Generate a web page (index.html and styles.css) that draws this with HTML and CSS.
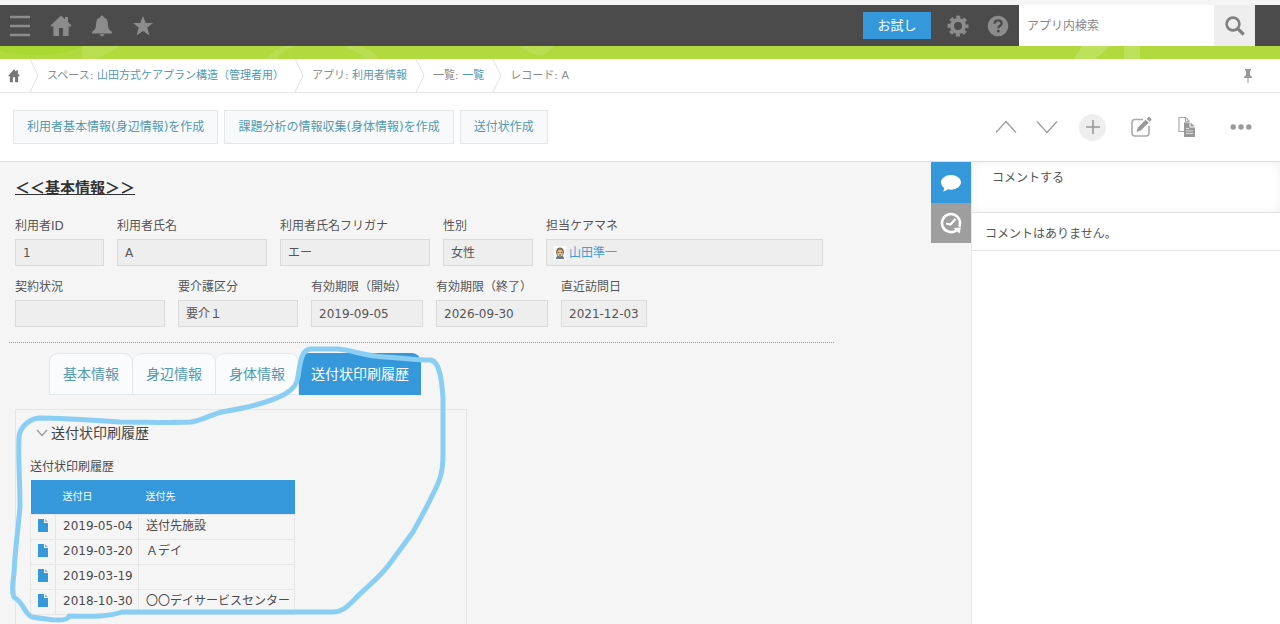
FILE: index.html
```html
<!DOCTYPE html>
<html lang="ja">
<head>
<meta charset="utf-8">
<title>利用者情報</title>
<link rel="stylesheet" href="styles.css">
</head>
<body>
<header class="topbar">
  <nav class="topbar-nav" aria-label="メイン">
    <button class="icon-btn" type="button" aria-label="メニュー"><svg width="22" height="22" viewBox="0 0 22 22"><path d="M1 2h20M1 11h20M1 20h20" stroke="currentColor" stroke-width="2.4"/></svg></button>
    <a class="icon-btn" href="#" aria-label="ポータル"><svg width="22" height="22" viewBox="0 0 22 22"><path d="M11 0.500L15 4.300V2h3v5.100L21.500 10.500l-1.500 1.400L18.600 11V21H13v-8H9v8H3.400V11L2 11.900 0.500 10.500z" fill="currentColor"/></svg></a>
    <button class="icon-btn" type="button" aria-label="通知"><svg width="22" height="22" viewBox="0 0 22 22"><path d="M11 0.500c1 0 1.600.8 1.600 1.800 3 .8 4.300 3.300 4.300 6.500 0 4.600 1.200 6.200 4 7.900v1.800H1.100v-1.800c2.800-1.700 4-3.300 4-7.900 0-3.200 1.300-5.700 4.300-6.500 0-1 .6-1.800 1.600-1.800zM8.500 19.300h5c-.4 1.300-1.300 2-2.500 2s-2.100-.7-2.500-2z" fill="currentColor"/></svg></button>
    <button class="icon-btn" type="button" aria-label="ブックマーク"><svg width="22" height="22" viewBox="0 0 22 22"><path d="M11 1l2.800 7H21l-5.700 4.600L17.500 20.500 11 16l-6.500 4.500 2.200-7.900L1 8h7.200z" fill="currentColor"/></svg></button>
  </nav>
  <div class="topbar-tools">
    <button class="trial" type="button">お試し</button>
    <button class="icon-btn" type="button" aria-label="設定"><svg width="22" height="22" viewBox="0 0 22 22"><g fill="none" stroke="currentColor"><circle cx="11" cy="11" r="6" stroke-width="4"/><circle cx="11" cy="11" r="9" stroke-width="3" stroke-dasharray="4 3.070" stroke-dashoffset="2"/></g></svg></button>
    <button class="icon-btn" type="button" aria-label="ヘルプ"><svg width="22" height="22" viewBox="0 0 22 22"><circle cx="11" cy="11" r="10.300" fill="currentColor"/><path d="M7.600 8.800c0-2.200 1.400-3.400 3.500-3.400s3.500 1.200 3.500 3c0 2.400-3.200 2.400-3.200 4.800" fill="none" stroke="#4b4b4b" stroke-width="2.400"/><circle cx="11.300" cy="16" r="1.500" fill="#4b4b4b"/></svg></button>
    <form class="search">
      <input class="search-input" type="search" placeholder="アプリ内検索" aria-label="アプリ内検索">
      <button class="search-btn" type="button" aria-label="検索"><svg width="20" height="20" viewBox="0 0 20 20"><g fill="none" stroke="currentColor"><circle cx="8" cy="8" r="6.400" stroke-width="2.600"/><path d="M12.700 12.700l6 5.800" stroke-width="3.200"/></g></svg></button>
    </form>
  </div>
</header>
<div class="ribbon">
  <svg width="560" height="13" viewBox="0 0 560 13" aria-hidden="true"><path d="M0 5c28 7 62 5 84-5H0z" fill="#a8d831"/><path d="M82 0h38C110 6 104 9 96 13H82zM266 13c4-6 10-10 18-13h14c-13 3-18 8-22 13zM342 0h18c10 3 16 8 20 13h-15c-6-6-13-10-23-13zM520 0h34c-8 12-22 12-34 0z" fill="#b9de4f"/></svg>
  <svg width="210" height="13" viewBox="0 0 210 13" aria-hidden="true"><path d="M14 0h32L28 13H4zM52 0h48l-2 0H84V13H68V0z" fill="none"/><path d="M12 0h28L26 13H4zM54 0h16v13H54z" fill="#bce15a"/></svg>
</div>
<nav class="crumbs" aria-label="パンくず">
  <a class="crumb-home" href="#" aria-label="ホーム"><svg width="12" height="14" viewBox="0 0 22 22" preserveAspectRatio="none"><path d="M11 0.500L15 4.300V2h3v5.100L21.500 10.500l-1.500 1.400L18.600 11V21H13v-8H9v8H3.400V11L2 11.900 0.500 10.500z" fill="#777"/></svg></a>
  <svg class="crumb-sep" width="10" height="33" viewBox="0 0 10 33"><path d="M1 0l8 16.500L1 33"/></svg>
  <span class="crumb crumb-space">スペース: <a href="#">山田方式ケアプラン構造（管理者用）</a></span>
  <svg class="crumb-sep" width="10" height="33" viewBox="0 0 10 33"><path d="M1 0l8 16.500L1 33"/></svg>
  <span class="crumb">アプリ: <a href="#">利用者情報</a></span>
  <svg class="crumb-sep" width="10" height="33" viewBox="0 0 10 33"><path d="M1 0l8 16.500L1 33"/></svg>
  <span class="crumb">一覧: <a href="#">一覧</a></span>
  <svg class="crumb-sep" width="10" height="33" viewBox="0 0 10 33"><path d="M1 0l8 16.500L1 33"/></svg>
  <span class="crumb">レコード: A</span>
  <button class="pin" type="button" aria-label="固定"><svg width="8" height="14" viewBox="0 0 8 14"><path d="M1 0h6v1.500H6V6l2 2v1H4.500v5h-1V9H0V8l2-2V1.500H1z" fill="#999"/></svg></button>
</nav>
<div class="toolbar">
  <div class="actions">
    <button class="action" type="button">利用者基本情報(身辺情報)を作成</button>
    <button class="action" type="button">課題分析の情報収集(身体情報)を作成</button>
    <button class="action" type="button">送付状作成</button>
  </div>
  <div class="record-tools">
    <div class="pager">
      <button class="tool" type="button" aria-label="前へ"><svg width="22" height="14" viewBox="0 0 22 14"><path d="M1 12.500L11 1.500l10 11" fill="none" stroke="#999" stroke-width="1.200"/></svg></button>
      <button class="tool" type="button" aria-label="次へ"><svg width="22" height="14" viewBox="0 0 22 14"><path d="M1 1.500l10 11 10-11" fill="none" stroke="#999" stroke-width="1.200"/></svg></button>
    </div>
    <button class="tool tool-add" type="button" aria-label="追加"><svg width="14" height="14" viewBox="0 0 14 14"><path d="M7 0v14M0 7h14" stroke="#999" stroke-width="1.600"/></svg></button>
    <button class="tool" type="button" aria-label="編集"><svg width="22" height="22" viewBox="0 0 22 22"><path d="M13 3.500H5a3 3 0 0 0-3 3V17a3 3 0 0 0 3 3h11a3 3 0 0 0 3-3v-7" fill="none" stroke="#aaa" stroke-width="1.600"/><path d="M6.500 16l1.400-4.400 7.800-7.800 3 3-7.900 7.800zM16.700 2.800l1.500-1.500c.6-.5 1-.4 1.500 0l1.400 1.400c.4.500.5 1 0 1.500l-1.500 1.500z" fill="#999"/></svg></button>
    <button class="tool" type="button" aria-label="複製"><svg width="18" height="22" viewBox="0 0 18 22"><path d="M6 15.500H1V1.500h6.500l4 4" fill="none" stroke="#aaa" stroke-width="1.200"/><path d="M7.500 1.500v4h4" fill="none" stroke="#aaa"/><path d="M6 6.500h5.500v5H17V21H6zM12.500 6.500L17 10.500h-4.500z" fill="#999"/><path d="M8 12.500h3M8 15h7M8 17.500h7" stroke="#ddd"/></svg></button>
    <button class="tool tool-more" type="button" aria-label="その他"><svg width="22" height="6" viewBox="0 0 22 6"><g fill="#999"><circle cx="3.200" cy="3" r="2.700"/><circle cx="11" cy="3" r="2.700"/><circle cx="18.800" cy="3" r="2.700"/></g></svg></button>
  </div>
</div>
<div class="workspace">
  <main class="record">
    <h1 class="record-title">＜＜基本情報＞＞</h1>
    <dl class="fields">
      <div class="field w-id"><dt>利用者ID</dt><dd>1</dd></div>
      <div class="field w-name"><dt>利用者氏名</dt><dd>A</dd></div>
      <div class="field w-name"><dt>利用者氏名フリガナ</dt><dd>エー</dd></div>
      <div class="field w-sex"><dt>性別</dt><dd>女性</dd></div>
      <div class="field w-manager"><dt>担当ケアマネ</dt><dd><svg width="12" height="14" viewBox="0 0 12 14"><path fill="#fff" d="M0 0h12v14H0z"/><path d="M2 13c0-3 2-4 4-4s4 1 4 4z" fill="#68798a"/><ellipse cx="6" cy="6" rx="4" ry="4.600" fill="#7e6648"/><ellipse cx="6" cy="7" rx="2.800" ry="3.600" fill="#e2bd8e"/><path d="M4 6.500h1.500M6.500 6.500H8M5 9h2" stroke="#544336" stroke-width=".7"/></svg><a href="#">山田準一</a></dd></div>
    </dl>
    <dl class="fields">
      <div class="field w-name"><dt>契約状況</dt><dd></dd></div>
      <div class="field w-care"><dt>要介護区分</dt><dd>要介１</dd></div>
      <div class="field w-term"><dt>有効期限（開始）</dt><dd>2019-09-05</dd></div>
      <div class="field w-term"><dt>有効期限（終了）</dt><dd>2026-09-30</dd></div>
      <div class="field w-visit"><dt>直近訪問日</dt><dd>2021-12-03</dd></div>
    </dl>
    <hr class="rule">
    <div class="tabs" role="tablist">
      <button class="tab" type="button" role="tab">基本情報</button>
      <button class="tab" type="button" role="tab">身辺情報</button>
      <button class="tab" type="button" role="tab">身体情報</button>
      <button class="tab tab-active" type="button" role="tab" aria-selected="true">送付状印刷履歴</button>
    </div>
    <section class="group">
      <h2 class="group-title"><svg width="12" height="8" viewBox="0 0 12 8"><path d="M1 1l5 5.500L11 1" fill="none" stroke="#999" stroke-width="1.200"/></svg>送付状印刷履歴</h2>
      <table class="history">
        <caption>送付状印刷履歴</caption>
        <thead><tr><th class="col-icon"></th><th class="col-date">送付日</th><th class="col-to">送付先</th></tr></thead>
        <tbody>
          <tr><td><a href="#" aria-label="詳細"><svg width="10" height="13" viewBox="0 0 10 13"><path d="M0 0h6v4h4v9H0z" fill="#3498db"/><path d="M7 0l3 3H7z" fill="#7dbce8"/></svg></a></td><td>2019-05-04</td><td>送付先施設</td></tr>
          <tr><td><a href="#" aria-label="詳細"><svg width="10" height="13" viewBox="0 0 10 13"><path d="M0 0h6v4h4v9H0z" fill="#3498db"/><path d="M7 0l3 3H7z" fill="#7dbce8"/></svg></a></td><td>2019-03-20</td><td>Ａデイ</td></tr>
          <tr><td><a href="#" aria-label="詳細"><svg width="10" height="13" viewBox="0 0 10 13"><path d="M0 0h6v4h4v9H0z" fill="#3498db"/><path d="M7 0l3 3H7z" fill="#7dbce8"/></svg></a></td><td>2019-03-19</td><td></td></tr>
          <tr><td><a href="#" aria-label="詳細"><svg width="10" height="13" viewBox="0 0 10 13"><path d="M0 0h6v4h4v9H0z" fill="#3498db"/><path d="M7 0l3 3H7z" fill="#7dbce8"/></svg></a></td><td>2018-10-30</td><td>〇〇デイサービスセンター</td></tr>
        </tbody>
      </table>
    </section>
    <svg class="marker" width="460" height="290" viewBox="0 340 460 290" aria-hidden="true"><path d="M298 377C300 364 301 349 311 349H338C352 350 365 356 384 357C402 358 418 360 431 360C440 362 442 382 443 398V455C443 474 439 482 433 494C427 507 420 519 413 532L391 562C379 579 365 588 354 600C348 606 342 612 333 612H122C104 618 85 616 69 616C68 622 50 620 32 617C24 614 25 604 14 597C11 592 13 582 14 573C15 550 18 530 20 507C20 480 18 460 19 437C20 427 29 419 39 418C60 418 90 420 120 422C145 422 170 423 191 422C205 420 212 413 227 411C250 407 271 402 285 394C294 389 297 384 298 377Z"/></svg>
  </main>
  <div class="side-tabs">
    <button class="side-tab side-tab-active" type="button" aria-label="コメント"><svg width="20" height="18" viewBox="0 0 20 18"><path d="M10 1c5.500 0 10 3.300 10 7.300s-4.500 7.400-10 7.400c-1.200 0-2.400-.2-3.500-.5C5.500 16.500 4 17.200 2 17.400c.8-1 1.200-2.200 1.100-3.500C1.200 12.500 0 10.500 0 8.300 0 4.300 4.500 1 10 1z" fill="#fff"/></svg></button>
    <button class="side-tab" type="button" aria-label="変更履歴"><svg width="22" height="22" viewBox="0 0 22 22"><path d="M16.500 18.200A9 9 0 1 1 20 11c0 1.500-.3 2.700-.7 3.700" fill="none" stroke="#fff" stroke-width="2.600"/><path d="M13.500 16l7.500-.5-1.500 6z" fill="#fff"/><path d="M6 11.500l4.500 1L15.500 7" fill="none" stroke="#fff" stroke-width="2.200"/></svg></button>
  </div>
  <aside class="comments">
    <textarea class="comment-input" placeholder="コメントする" aria-label="コメントする"></textarea>
    <p class="comment-empty">コメントはありません。</p>
  </aside>
</div>
</body>
</html>
```
FILE: styles.css
```css
* { box-sizing: border-box; }

body {
  margin: 0;
  height: 100vh;
  display: flex;
  flex-direction: column;
  overflow: hidden;
  border-top: 5px solid #f5f5f5;
  background: #fff;
  color: #555;
  font: 12px/18px "DejaVu Sans", "Noto Sans CJK JP", sans-serif;
}

button, input, textarea { font: inherit; color: inherit; border: 0; margin: 0; padding: 0; background: none; }
a { color: #5399b2; text-decoration: none; }
svg { display: block; flex: none; }
dl, dd, p { margin: 0; }

.topbar { display: flex; justify-content: space-between; height: 41px; flex: none; background: #4b4b4b; color: #8f8f8f; }
.topbar-nav { display: flex; align-items: center; gap: 19px; padding-left: 9px; }
.topbar-tools { display: flex; align-items: center; gap: 18px; padding-right: 25px; }
.icon-btn { display: flex; color: #8c8c8c; }
.trial { width: 68px; height: 27px; background: #3498db; color: #fff; font-size: 13px; margin-right: -2px; }
.search { display: flex; height: 41px; margin-left: -8px; }
.search-input { width: 195px; padding: 0 8px; background: #fff; }
.search-input::placeholder { color: #888; }
.search-btn { display: flex; align-items: center; justify-content: center; width: 41px; background: #eee; color: #808080; }

.ribbon { display: flex; justify-content: space-between; height: 13px; flex: none; background: #b1da3e; overflow: hidden; }

.crumbs { display: flex; align-items: center; height: 34px; flex: none; border-bottom: 1px solid #e8e8e8; font-size: 11px; color: #8c8c8c; padding: 0 28px 0 8px; }
.crumb-home { margin-right: 9px; }
.crumb-sep { fill: none; stroke: #dde3e3; }
.crumb { padding: 0 8px; white-space: nowrap; }
.crumb-space { padding-right: 10px; }
.pin { margin-left: auto; }

.toolbar { display: flex; justify-content: space-between; align-items: center; height: 69px; flex: none; border-bottom: 1px solid #d5dfe0; padding: 0 28px 0 13px; }
.actions { display: flex; gap: 6px; }
.action { height: 34px; padding: 0 13px; border: 1px solid #e3e7e8; background: #f7f9fa; color: #5399b2; white-space: nowrap; }
.record-tools { display: flex; align-items: center; gap: 24px; }
.pager { display: flex; gap: 19px; margin-right: -3px; }
.tool { display: flex; align-items: center; justify-content: center; min-width: 22px; }
.tool-add { width: 27px; height: 27px; border-radius: 50%; background: #eee; }
.tool-more { margin-left: 8px; }

.workspace { display: flex; flex: 1; min-height: 0; background: #f5f5f5; }
.record { position: relative; flex: 1; min-width: 0; display: flex; flex-direction: column; overflow: hidden; padding: 15px 15px 0; }
.record-title { margin: 0 0 17px; font-size: 15px; line-height: 23px; font-weight: 700; color: #333; text-decoration: underline; }
.fields { display: flex; gap: 13px; margin-bottom: 12px; }
.field dt { line-height: 18px; margin-bottom: 4px; white-space: nowrap; }
.field dd { display: flex; align-items: center; gap: 3px; height: 27px; padding: 0 7px; border: 1px solid #dadada; background: #eee; }
.field a { color: #4a9dd0; }
.w-id { width: 89px; }
.w-name { width: 150px; }
.w-sex { width: 90px; }
.w-manager { width: 277px; }
.w-care { width: 120px; }
.w-term { width: 112px; }
.w-visit { width: 86px; }

.rule { width: 825px; max-width: 100%; margin: 3px 0 10px -6px; border: 0; border-top: 1px dotted #999; }

.tabs { display: flex; margin-left: 34px; }
.tab { height: 42px; padding: 0 13px; border: 1px solid #e3e7e8; border-left-width: 0; border-radius: 9px 9px 0 0; background: #f9fbfd; color: #5399b2; font-size: 14px; white-space: nowrap; }
.tab:first-child { border-left-width: 1px; }
.tab-active { padding: 0 12px; border: 0; background: #3498db; color: #fff; }

.group { flex: 1; width: 452px; margin-top: 14px; padding: 13px 14px; border: 1px solid #e6e6e6; border-bottom: 0; }
.group-title { display: flex; align-items: center; gap: 3px; margin: 0 0 15px; padding-left: 6px; font-size: 14px; line-height: 20px; font-weight: 400; color: #444; }
.history { border-collapse: collapse; table-layout: fixed; width: 265px; color: #4b4b4b; }
.history caption { padding-bottom: 4px; text-align: left; }
.history th { height: 34px; padding: 0 7px; background: #3498db; color: #fff; font-size: 10px; font-weight: 400; text-align: left; }
.history td { height: 25px; padding: 0 7px 2px; border: 1px solid #e6e6e6; line-height: 18px; white-space: nowrap; }
.col-icon { width: 25px; }
.col-date { width: 83px; }

.marker { position: absolute; left: 0; top: 178px; fill: none; stroke: #8acff3; stroke-width: 5; stroke-linejoin: round; }

.side-tabs { width: 41px; flex: none; border-right: 1px solid #e8e8e8; }
.side-tab { display: flex; align-items: center; justify-content: center; width: 40px; height: 40px; background: #9e9e9e; }
.side-tab-active { height: 41px; background: #3498db; }

.comments { width: 308px; flex: none; background: #fff; }
.comment-input { display: block; width: 100%; height: 51px; padding: 7px 20px; border-bottom: 1px solid #e3e3e3; box-shadow: inset 0 0 10px #f0f0f0; resize: none; }
.comment-input::placeholder { color: #555; }
.comment-empty { height: 38px; padding: 12px 13px 0; border-bottom: 1px solid #e6e6e6; }
```
